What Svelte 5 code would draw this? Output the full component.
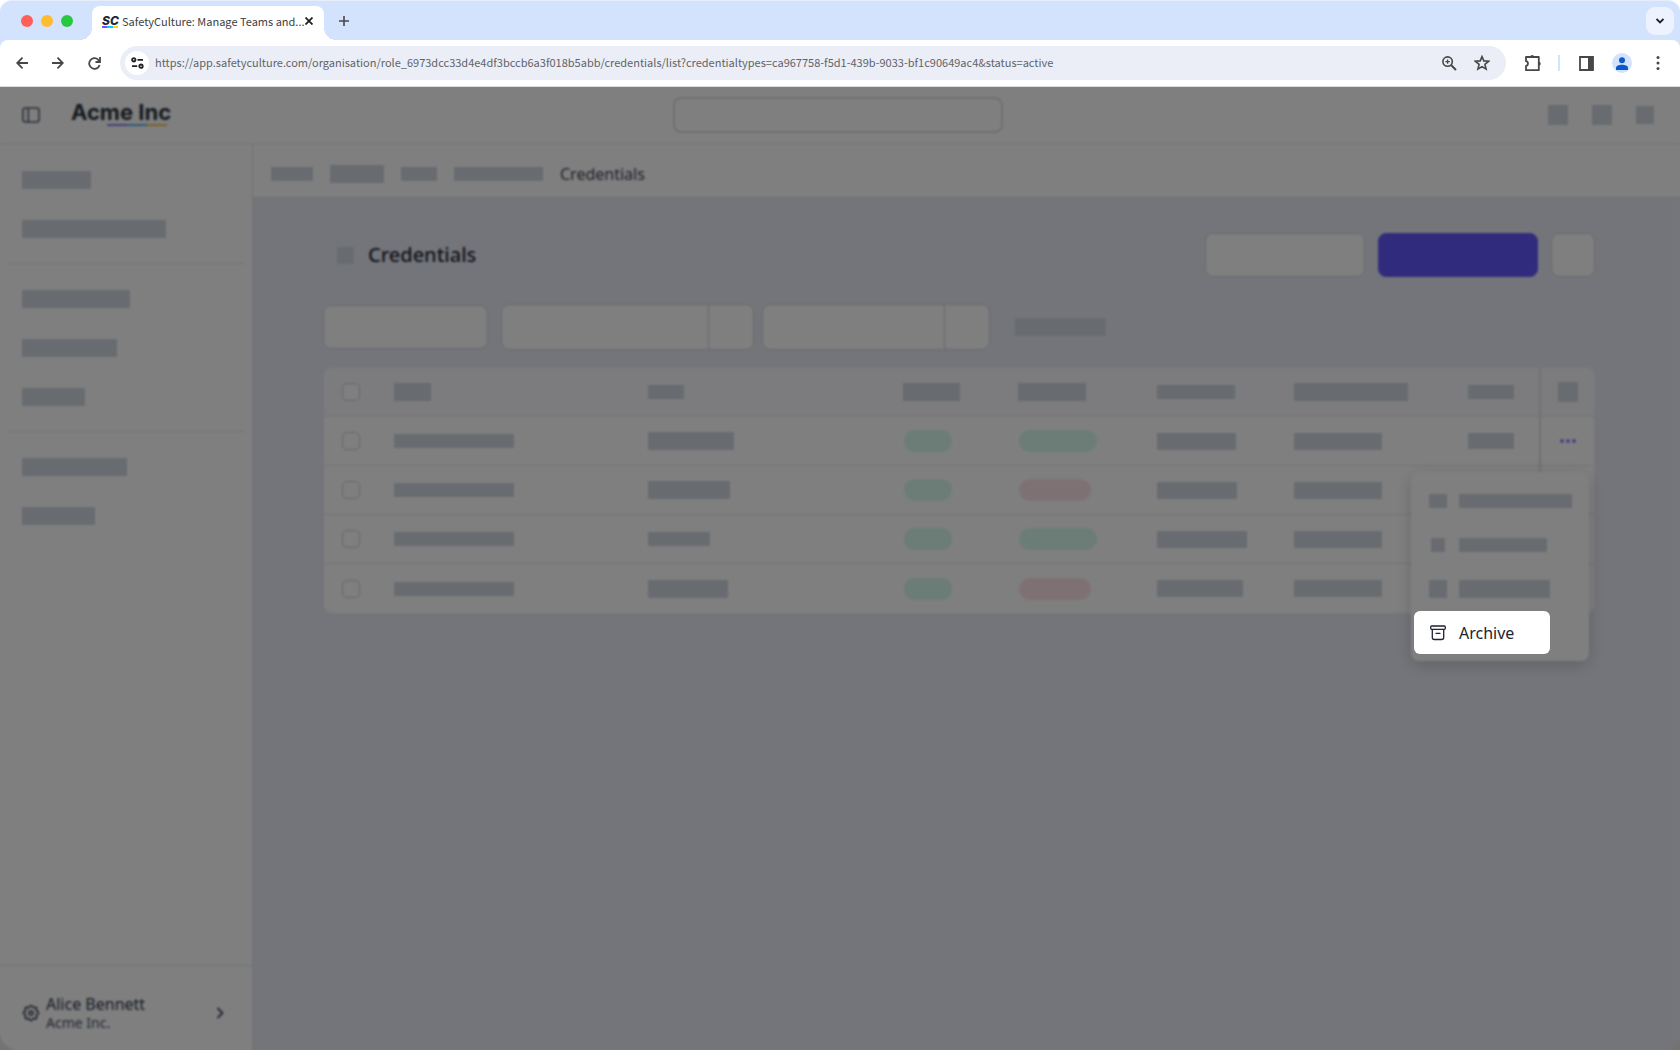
<script>
	let url = $state('https://app.safetyculture.com/organisation/role_6973dcc33d4e4df3bccb6a3f018b5abb/credentials/list?credentialtypes=ca967758-f5d1-439b-9033-bf1c90649ac4&status=active');
	let search = $state('');
	let menuOpen = $state(true);
	let selected = $state([false, false, false, false]);

	// placeholder widths, one list per sidebar section
	const sections = [
		[69, 144],
		[108, 95, 63],
		[105, 73]
	];

	const crumbs = [
		{ w: 42, h: 14 },
		{ w: 54, h: 18 },
		{ w: 36, h: 14 },
		{ w: 89, h: 14 }
	];

	const headers = [
		{ w: 37, h: 18 },
		{ w: 36, h: 14 },
		{ w: 57, h: 18 },
		{ w: 68, h: 18 },
		{ w: 78, h: 14 },
		{ w: 114, h: 18 },
		{ w: 46, h: 14 }
	];

	const rows = [
		{ type: 86, typeH: 18, ok: true, issued: 79 },
		{ type: 82, typeH: 18, ok: false, issued: 80 },
		{ type: 62, typeH: 14, ok: true, issued: 90 },
		{ type: 80, typeH: 18, ok: false, issued: 86 }
	];

	const actions = [
		{ icon: 18, w: 113, h: 14 },
		{ icon: 14, w: 88, h: 14 },
		{ icon: 18, w: 91, h: 18 }
	];

	function toggleAll(e) {
		selected = selected.map(() => e.target.checked);
	}
</script>

{#snippet block(w, h)}
	<span class="block" style="width:{w}px;height:{h}px"></span>
{/snippet}

<div class="window">
	<header class="chrome">
		<div class="tabstrip">
			<div class="lights">
				<span class="light red"></span>
				<span class="light yellow"></span>
				<span class="light green"></span>
			</div>
			<div class="tab">
				<span class="favicon">SC</span>
				<span class="tab-title">SafetyCulture: Manage Teams and...</span>
				<button class="bare close" aria-label="Close tab">
					<svg width="8" height="8" viewBox="0 0 8 8"><path d="M.5.5l7 7M7.5.5l-7 7" stroke="#1f2023" stroke-width="1.800" /></svg>
				</button>
			</div>
			<button class="bare new-tab" aria-label="New tab">
				<svg width="10" height="10" viewBox="0 0 10 10"><path d="M5 0v10M0 5h10" stroke="#474747" stroke-width="1.600" /></svg>
			</button>
			<button class="bare tab-search" aria-label="Search tabs">
				<svg width="8" height="6" viewBox="0 0 8 6"><path d="M.5 1L4 4.500 7.500 1" fill="none" stroke="#1f2023" stroke-width="1.800" /></svg>
			</button>
		</div>

		<div class="toolbar">
			<button class="bare" aria-label="Back">
				<svg width="12" height="12" viewBox="0 0 12 12" fill="none" stroke="#474747" stroke-width="1.800"><path d="M12 6H1.500M6.500.7L1.200 6l5.300 5.300" /></svg>
			</button>
			<button class="bare" aria-label="Forward">
				<svg width="12" height="12" viewBox="0 0 12 12" fill="none" stroke="#474747" stroke-width="1.800"><path d="M0 6h10.500M5.500.7L10.800 6l-5.300 5.300" /></svg>
			</button>
			<button class="bare" aria-label="Reload">
				<svg width="13" height="13" viewBox="0 0 13 13" fill="none" stroke="#474747" stroke-width="1.800"><path d="M11.600 8A5.300 5.300 0 1 1 10.300 2.800L12 4.500" /><path d="M12 0v5H7.500" /></svg>
			</button>
			<div class="address">
				<button class="bare site" aria-label="Site information">
					<svg width="13" height="12" viewBox="0 0 13 12" fill="none" stroke="#1f2023" stroke-width="1.800"><circle cx="2.800" cy="2.800" r="1.700" /><path d="M6.500 2.800H12M1 9.200h5.200" /><circle cx="10" cy="9.200" r="1.700" /></svg>
				</button>
				<input class="url" type="text" aria-label="Address" spellcheck="false" bind:value={url} />
				<button class="bare" aria-label="Zoom">
					<svg width="15" height="15" viewBox="0 0 15 15" fill="none" stroke="#474747"><circle cx="5.600" cy="5.600" r="4.700" stroke-width="1.600" /><path d="M9 9l5 5" stroke-width="2" /><path d="M5.600 3.400v4.400M3.400 5.600h4.400" stroke-width="1.300" /></svg>
				</button>
				<button class="bare" aria-label="Bookmark">
					<svg width="16" height="16" viewBox="0 0 16 16" fill="none" stroke="#474747" stroke-width="1.600"><path d="M8 1.600l1.800 4.300 4.800.4-3.700 3.100 1.200 4.700L8 11.600l-4.100 2.500 1.200-4.700-3.700-3.100 4.800-.4z" /></svg>
				</button>
			</div>
			<button class="bare extensions" aria-label="Extensions">
				<svg width="18" height="18" viewBox="0 0 18 18" fill="none" stroke="#474747" stroke-width="1.800"><path d="M2 3h12.800v13.200H2v-4.200c2.600-.2 2.600-4.600 0-4.800z" stroke-linejoin="round" /><path d="M6.300 3a1.900 1.900 0 0 1 3.800 0zM14.800 7.800a1.900 1.900 0 0 1 0 3.800z" fill="#474747" stroke="none" /></svg>
			</button>
			<span class="divider"></span>
			<button class="bare side-panel" aria-label="Side panel">
				<svg width="15" height="15" viewBox="0 0 15 15"><path d="M1 1h13v13H1z" fill="none" stroke="#474747" stroke-width="1.800" /><path d="M9 1h5v13H9z" fill="#474747" /></svg>
			</button>
			<button class="bare profile" aria-label="Profile">
				<svg width="12" height="13" viewBox="0 0 12 13" fill="#0b57d0"><circle cx="6" cy="3.200" r="3" /><path d="M0 13v-2.200C0 8.700 3 7.800 6 7.800s6 .9 6 3V13z" /></svg>
			</button>
			<button class="bare kebab" aria-label="Browser menu">
				<svg width="4" height="14" viewBox="0 0 4 14" fill="#474747"><circle cx="2" cy="1.500" r="1.500" /><circle cx="2" cy="7" r="1.500" /><circle cx="2" cy="12.500" r="1.500" /></svg>
			</button>
		</div>
	</header>

	<div class="stage">
		<div class="app">
			<header class="topbar">
				<div class="brand">
					<button class="bare" aria-label="Toggle sidebar">
						<svg width="18" height="16" viewBox="0 0 18 16" fill="none" stroke="#545f70" stroke-width="1.600"><rect x="1" y="1" width="16" height="14" rx="2.500" /><path d="M6.300 1v14" /></svg>
					</button>
					<a class="logo" href="/">Acme Inc</a>
				</div>
				<input class="search" type="search" aria-label="Search" bind:value={search} />
				<div class="top-icons">
					<button class="bare" aria-label="Help">{@render block(20, 20)}</button>
					<button class="bare" aria-label="Apps">{@render block(20, 20)}</button>
					<button class="bare" aria-label="Notifications">{@render block(18, 18)}</button>
				</div>
			</header>

			<div class="body">
				<aside class="sidebar">
					<nav>
						{#each sections as items}
							<ul>
								{#each items as w}
									<li><a href="/" aria-label="Section">{@render block(w, 18)}</a></li>
								{/each}
							</ul>
						{/each}
					</nav>
					<button class="account">
						<svg width="18" height="18" viewBox="0 0 18 18" fill="none" stroke="#2f3949" stroke-width="1.500" stroke-linejoin="round"><path d="M14.200 6.800Q19 9 14.200 11.200Q16.100 16.100 11.200 14.200Q9 19 6.800 14.200Q1.900 16.100 3.800 11.200Q-1 9 3.800 6.800Q1.900 1.900 6.800 3.800Q9-1 11.200 3.800Q16.100 1.900 14.200 6.800z" /><circle cx="9" cy="9" r="2" /></svg>
						<span class="who">
							<span class="name">Alice Bennett</span>
							<span class="org">Acme Inc.</span>
						</span>
						<svg width="8" height="12" viewBox="0 0 8 12" fill="none" stroke="#3f495a" stroke-width="1.800"><path d="M1.500 1l5 5-5 5" /></svg>
					</button>
				</aside>

				<main>
					<nav class="crumbs">
						{#each crumbs as c}
							<a href="/" aria-label="Breadcrumb">{@render block(c.w, c.h)}</a>
						{/each}
						<span>Credentials</span>
					</nav>

					<div class="content">
						<div class="heading">
							{@render block(17, 17)}
							<h1>Credentials</h1>
							<div class="heading-actions">
								<button class="btn" aria-label="Export"></button>
								<button class="btn primary" aria-label="Add credential"></button>
								<button class="btn more" aria-label="More"></button>
							</div>
						</div>

						<div class="filters">
							<button class="btn add-filter" aria-label="Add filter"></button>
							<div class="chip type">
								<button aria-label="Credential type"></button>
								<button class="clear" aria-label="Clear credential type"></button>
							</div>
							<div class="chip status">
								<button aria-label="Status"></button>
								<button class="clear" aria-label="Clear status"></button>
							</div>
							<button class="bare reset" aria-label="Reset filters">{@render block(91, 18)}</button>
						</div>

						<table>
							<colgroup>
								<col class="c-check" />
								<col />
								<col class="c-type" />
								<col class="c-state" />
								<col class="c-expiry" />
								<col class="c-issued" />
								<col class="c-updated" />
								<col class="c-files" />
								<col class="c-actions" />
							</colgroup>
							<thead>
								<tr>
									<th class="check"><input type="checkbox" aria-label="Select all" onchange={toggleAll} /></th>
									{#each headers as h}
										<th>{@render block(h.w, h.h)}</th>
									{/each}
									<th class="actions">{@render block(20, 20)}</th>
								</tr>
							</thead>
							<tbody>
								{#each rows as row, i}
									<tr>
										<td class="check"><input type="checkbox" aria-label="Select row" bind:checked={selected[i]} /></td>
										<td>{@render block(120, 14)}</td>
										<td>{@render block(row.type, row.typeH)}</td>
										<td><span class="pill"></span></td>
										<td><span class="pill wide" class:expired={!row.ok}></span></td>
										<td>{@render block(row.issued, 17)}</td>
										<td>{@render block(88, 17)}</td>
										<td>{#if i === 0}{@render block(46, 16)}{/if}</td>
										<td class="actions" class:anchor={i === 0}>
											{#if i === 0}
												<button class="bare" aria-label="Row actions" onclick={() => (menuOpen = !menuOpen)}>
													<svg width="16" height="4" viewBox="0 0 16 4" fill="#6559ff"><circle cx="2" cy="2" r="1.700" /><circle cx="8" cy="2" r="1.700" /><circle cx="14" cy="2" r="1.700" /></svg>
												</button>
												{#if menuOpen}
													<div class="menu" role="menu">
														{#each actions as a}
															<button class="item" role="menuitem" aria-label="Action">
																<span class="item-icon">{@render block(a.icon, a.h)}</span>
																{@render block(a.w, a.h)}
															</button>
														{/each}
														<button class="item archive" role="menuitem">
															<span class="item-icon">
																<svg width="16" height="16" viewBox="0 0 16 16" fill="none" stroke="#1d2330" stroke-width="1.300" stroke-linejoin="round"><rect x=".7" y="1" width="14.600" height="3.300" rx="1" /><path d="M2.300 4.300v8.200a2 2 0 0 0 2 2h7.400a2 2 0 0 0 2-2V4.300" /><path d="M6 8.300h4" stroke-linecap="round" /></svg>
															</span>
															Archive
														</button>
													</div>
												{/if}
											{/if}
										</td>
									</tr>
								{/each}
							</tbody>
						</table>
					</div>
				</main>
			</div>
		</div>
		<div class="scrim"></div>
	</div>
</div>

<style>
	:global(body) {
		background: #fff;
	}

	.window {
		display: flex;
		flex-direction: column;
		min-height: 100vh;
		font-family: "Noto Sans", sans-serif;
		color: #1f2533;
	}

	button,
	input {
		font: inherit;
		color: inherit;
		box-sizing: border-box;
		margin: 0;
	}

	.bare {
		display: flex;
		align-items: center;
		justify-content: center;
		padding: 0;
		border: none;
		background: none;
	}

	svg,
	.block {
		display: block;
		flex: none;
	}

	.block {
		background: #d0d6df;
	}

	/* browser chrome */
	.chrome {
		font-family: "Noto Sans CJK SC", sans-serif;
		font-size: 11px;
		background: #d3e2fd;
		border-top: 1px solid #e6eefc;
		border-bottom: 1px solid #dcdcdc;
		border-radius: 12px 12px 0 0;
	}

	.tabstrip {
		display: flex;
		align-items: center;
		height: 39px;
		padding: 0 6px 0 21px;
	}

	.lights {
		display: flex;
		gap: 8px;
		margin-right: 19px;
	}

	.light {
		width: 12px;
		height: 12px;
		border-radius: 50%;
	}

	.red { background: #ff5f57; }
	.yellow { background: #febc2e; }
	.green { background: #28c840; }

	.tab {
		position: relative;
		display: flex;
		align-items: center;
		align-self: flex-end;
		box-sizing: border-box;
		width: 232px;
		height: 34px;
		padding: 0 12px 4px 10px;
		border-radius: 8px 8px 0 0;
		background: #fff;
		color: #3c4043;
	}

	.tab::before,
	.tab::after {
		content: "";
		position: absolute;
		bottom: 0;
		width: 12px;
		height: 12px;
	}

	.tab::before {
		left: -12px;
		background: radial-gradient(circle at 0 0, #d3e2fd 12px, #fff 12px);
	}

	.tab::after {
		right: -12px;
		background: radial-gradient(circle at 100% 0, #d3e2fd 12px, #fff 12px);
	}

	.favicon {
		width: 16px;
		margin-right: 4px;
		border-bottom: 2px solid;
		border-image: linear-gradient(90deg, #6559ff 33%, #00d1ff 33% 66%, #ffd500 66%) 1;
		font: italic 800 12px/11px Inter, sans-serif;
		color: #1f2533;
	}

	.tab-title {
		flex: 1;
		white-space: nowrap;
	}

	.new-tab {
		margin-left: 15px;
	}

	.tab-search {
		width: 28px;
		height: 28px;
		margin-left: auto;
		border-radius: 9px;
		background: #edf3fe;
	}

	.toolbar {
		display: flex;
		align-items: center;
		gap: 24px;
		height: 46px;
		padding: 0 20px 0 16px;
		border-radius: 8px 8px 0 0;
		background: #fff;
	}

	.address {
		display: flex;
		align-items: center;
		flex: 1;
		gap: 17px;
		box-sizing: border-box;
		height: 34px;
		margin-left: -5px;
		padding: 0 16px 0 5px;
		border-radius: 17px;
		background: #ebeef7;
	}

	.site {
		width: 24px;
		height: 24px;
		border-radius: 50%;
		background: #fff;
	}

	.url {
		flex: 1;
		min-width: 0;
		margin-left: -11px;
		padding: 0 0 2px;
		border: none;
		outline: none;
		background: none;
		color: #5f6368;
	}

	.extensions {
		margin-left: -6px;
	}

	.divider {
		width: 2px;
		height: 16px;
		margin-left: -8px;
		background: #d3e2fd;
	}

	.side-panel {
		margin-left: -5px;
	}

	.profile {
		width: 20px;
		height: 20px;
		margin-left: -6px;
		border-radius: 50%;
		background: #d3e2fd;
	}

	/* app */
	.stage {
		position: relative;
		display: flex;
		flex: 1;
		background: #e6e6e6;
	}

	.app {
		display: flex;
		flex: 1;
		flex-direction: column;
		min-width: 0;
		overflow: hidden;
		border-radius: 0 0 18px 18px;
		background: #fff;
	}

	/* dims everything but the highlighted menu item */
	.scrim {
		position: absolute;
		inset: 0;
		z-index: 1;
		background: rgba(0, 0, 0, 0.5);
		backdrop-filter: blur(1px);
		pointer-events: none;
	}

	.topbar {
		display: grid;
		grid-template-columns: 1fr 330px 1fr;
		align-items: center;
		box-sizing: border-box;
		height: 57px;
		padding: 0 26px 0 22px;
		border-bottom: 1px solid #e3e5ee;
	}

	.brand {
		display: flex;
		align-items: center;
		gap: 31px;
	}

	.logo {
		position: relative;
		padding-bottom: 7px;
		font: 700 22px/26px Inter, sans-serif;
		color: #2b3440;
		text-decoration: none;
	}

	.logo::after {
		content: "";
		position: absolute;
		right: 4px;
		bottom: 6px;
		width: 60px;
		height: 2px;
		background: linear-gradient(90deg, #8a74f5 33%, #58b0ee 33% 66%, #f0c44e 66%);
	}

	.search {
		height: 36px;
		border: 2px solid #dfe0ea;
		border-radius: 8px;
		outline: none;
		background: #fff;
	}

	.top-icons {
		display: flex;
		align-items: center;
		justify-content: flex-end;
		gap: 24px;
	}

	.body {
		display: flex;
		flex: 1;
	}

	.sidebar {
		display: flex;
		flex-direction: column;
		flex: none;
		box-sizing: border-box;
		width: 253px;
		border-right: 1px solid #e3e5ee;
	}

	.sidebar nav {
		flex: 1;
		padding: 1px 8px;
	}

	.sidebar ul {
		margin: 0;
		padding: 10px 14px;
		list-style: none;
	}

	.sidebar ul + ul {
		border-top: 1px solid #e2e4ea;
	}

	.sidebar li a {
		display: flex;
		align-items: center;
		height: 49px;
	}

	.account {
		display: flex;
		align-items: center;
		height: 85px;
		padding: 10px 28px 0 22px;
		border: none;
		border-top: 1px solid #dde2ec;
		background: none;
		text-align: left;
	}

	.who {
		display: flex;
		flex: 1;
		flex-direction: column;
		margin-left: 6px;
	}

	.name {
		font-size: 16px;
		line-height: 20px;
		color: #2f3949;
	}

	.org {
		font-size: 14px;
		line-height: 18px;
		color: #4a5567;
	}

	main {
		flex: 1;
		min-width: 0;
		background: #e9ebf4;
	}

	.crumbs {
		display: flex;
		align-items: center;
		gap: 17px;
		box-sizing: border-box;
		height: 54px;
		padding: 6px 18px 0;
		border-bottom: 1px solid #dcdee7;
		background: #fff;
		font-size: 16px;
		line-height: 20px;
		color: #3f495a;
	}

	.content {
		padding: 35px 85px 35px 70px;
	}

	.heading {
		display: flex;
		align-items: center;
		gap: 14px;
		padding-left: 14px;
	}

	h1 {
		margin: 0;
		font-size: 20px;
		line-height: 28px;
		font-weight: 500;
	}

	.heading-actions {
		display: flex;
		gap: 13px;
		margin-left: auto;
	}

	.btn {
		width: 160px;
		height: 44px;
		border: 1px solid #cdd0dd;
		border-radius: 8px;
		background: #fff;
	}

	.primary {
		border-color: #6357fa;
		background: #6357fa;
	}

	.more {
		width: 44px;
	}

	.filters {
		display: flex;
		align-items: center;
		gap: 8px;
		margin: 27px 0 18px;
	}

	.add-filter {
		width: 165px;
		margin-right: 5px;
	}

	.chip {
		display: flex;
		box-sizing: border-box;
		height: 46px;
		border: 1px solid #cdd0dd;
		border-radius: 8px;
		background: #fff;
	}

	.chip button {
		flex: 1;
		padding: 0;
		border: none;
		background: none;
	}

	.chip .clear {
		flex: 0 0 45px;
		border-left: 1px solid #cdd0dd;
	}

	.type {
		width: 253px;
	}

	.status {
		width: 228px;
	}

	.reset {
		margin-left: 17px;
	}

	table {
		width: calc(100% - 2px);
		margin: 0 1px;
		table-layout: fixed;
		border-collapse: separate;
		border-spacing: 0;
		border-radius: 8px;
		background: #fff;
	}

	.c-check { width: 70px; }
	.c-type { width: 255px; }
	.c-state { width: 115px; }
	.c-expiry { width: 139px; }
	.c-issued { width: 137px; }
	.c-updated { width: 174px; }
	.c-files { width: 71px; }
	.c-actions { width: 55px; }

	th,
	td {
		box-sizing: border-box;
		height: 49px;
		padding: 0;
		border-bottom: 1px solid #e4e6eb;
		vertical-align: middle;
	}

	tr:last-child td {
		border-bottom: none;
	}

	th {
		background: #f8f9fc;
		border-bottom-color: #e1e4ec;
	}

	th:first-child {
		border-radius: 8px 0 0 0;
	}

	th:last-child {
		border-radius: 0 8px 0 0;
	}

	.check {
		padding-left: 18px;
		text-align: left;
	}

	.check input {
		appearance: none;
		display: block;
		width: 18px;
		height: 18px;
		border: 1px solid #c6cad8;
		border-radius: 5px;
		background: #fff;
	}

	.check input:checked {
		background: #6357fa;
	}

	.actions {
		border-left: 2px solid #dfe1e7;
	}

	.actions > .block,
	.actions > .bare {
		margin: 0 auto;
	}

	.pill {
		display: block;
		width: 48px;
		height: 22px;
		margin-left: 1px;
		border-radius: 11px;
		background: #d6faed;
	}

	.wide {
		width: 78px;
	}

	.expired {
		width: 72px;
		background: #fde3e7;
	}

	.anchor {
		position: relative;
	}

	.menu {
		position: absolute;
		top: 55px;
		right: 5px;
		box-sizing: border-box;
		width: 178px;
		padding: 7px 3px;
		border-radius: 8px;
		background: #fff;
		box-shadow: 0 4px 16px rgba(31, 37, 51, 0.2);
	}

	.item {
		display: flex;
		align-items: center;
		gap: 12px;
		width: 100%;
		height: 44px;
		padding: 0 15px;
		border: none;
		border-radius: 6px;
		background: none;
		font-size: 16px;
	}

	.item-icon {
		display: flex;
		justify-content: center;
		width: 18px;
	}

	.archive {
		position: relative;
		z-index: 2;
		width: 136px;
		height: 43px;
		background: #fff;
		color: #1d2330;
	}
</style>
